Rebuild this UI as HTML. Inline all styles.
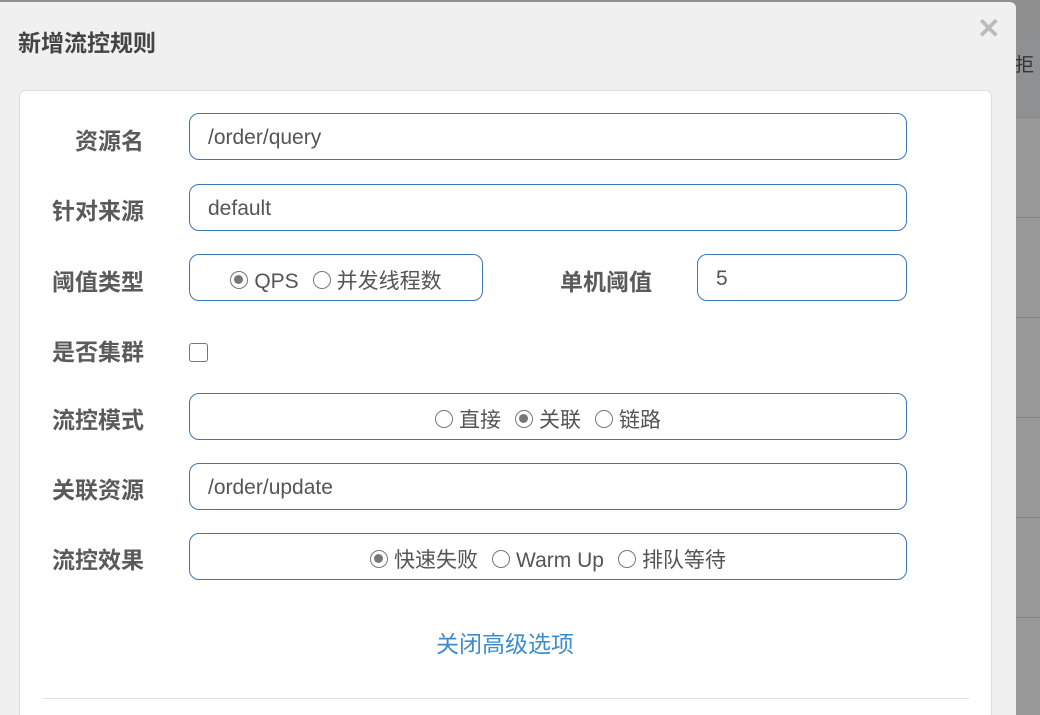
<!DOCTYPE html>
<html style="overflow:hidden;width:1040px;height:715px"><head><meta charset="utf-8"><style>
*{box-sizing:border-box;margin:0;padding:0}
body{width:1040px;height:715px;overflow:hidden;background:#999;font-family:"Liberation Sans","Noto Sans CJK SC",sans-serif;position:relative}
.bg1{position:absolute;left:0;top:0;width:1040px;height:37px;background:#8f8f8f}
.bg2{position:absolute;left:0;top:37px;width:1040px;height:80px;background:#8e9092}
.hl{position:absolute;left:0;width:1040px;height:1px;background:#858585}
.modal{position:absolute;left:0;top:2px;width:1016px;height:713px;background:#f0f0f0;border-radius:0 6px 0 0}
.title{position:absolute;left:18px;top:29px;font-size:23px;line-height:28px;font-weight:bold;color:#444}
.close{position:absolute;left:977px;top:12px;font-size:28px;color:#bbb;font-weight:bold}
.card{position:absolute;left:19px;top:90px;width:973px;height:625px;background:#fff;border:1px solid #ddd;border-bottom:none;border-radius:6px 6px 0 0}
.lbl{position:absolute;font-size:23px;line-height:26px;font-weight:bold;color:#5a5a5a;width:93px;text-align:right}
.box{position:absolute;border:1px solid #3a78b5;border-radius:10px;height:47px;font-size:21px;color:#555;line-height:47px;padding-left:18px}
.rg{padding-left:0;text-align:center;font-size:21px;line-height:53px}
.r{display:inline-block;width:18px;height:18px;border:1.5px solid #777;border-radius:50%;vertical-align:-1px;margin-right:6px;position:relative}
.r.c::after{content:"";position:absolute;left:3px;top:3px;width:9px;height:9px;border-radius:50%;background:#777}
.sp{margin-left:14px}
.cb{position:absolute;left:189px;top:343px;width:19px;height:19px;border:1.5px solid #777;border-radius:3px}
.link{position:absolute;left:0;width:1010px;text-align:center;top:625px;font-size:23px;color:#3c8dce}
.div{position:absolute;left:42px;top:698px;width:927px;height:1px;background:#e3e3e3}
</style></head><body>
<div class="bg1"></div><div class="bg2"></div>
<div class="hl" style="top:117px"></div><div class="hl" style="top:217px"></div><div class="hl" style="top:317px"></div><div class="hl" style="top:417px"></div><div class="hl" style="top:517px"></div><div class="hl" style="top:617px"></div>
<div style="position:absolute;left:1015px;top:50px;font-size:19px;color:#333">拒</div>
<div class="modal"></div>
<div class="title">新增流控规则</div>
<div class="close">✕</div>
<div class="card"></div>
<div class="lbl" style="left:51px;top:128px">资源名</div>
<div class="box" style="left:189px;top:113px;width:718px">/order/query</div>
<div class="lbl" style="left:51px;top:198px">针对来源</div>
<div class="box" style="left:189px;top:184px;width:718px">default</div>
<div class="lbl" style="left:51px;top:269px">阈值类型</div>
<div class="box rg" style="left:189px;top:254px;width:294px"><span class="r c"></span>QPS<span class="r sp"></span>并发线程数</div>
<div class="lbl" style="left:559px;top:269px">单机阈值</div>
<div class="box" style="left:697px;top:254px;width:210px">5</div>
<div class="lbl" style="left:51px;top:339px">是否集群</div>
<div class="cb"></div>
<div class="lbl" style="left:51px;top:407px">流控模式</div>
<div class="box rg" style="left:189px;top:393px;width:718px"><span class="r"></span>直接<span class="r c sp"></span>关联<span class="r sp"></span>链路</div>
<div class="lbl" style="left:51px;top:477px">关联资源</div>
<div class="box" style="left:189px;top:463px;width:718px">/order/update</div>
<div class="lbl" style="left:51px;top:547px">流控效果</div>
<div class="box rg" style="left:189px;top:533px;width:718px"><span class="r c"></span>快速失败<span class="r sp"></span>Warm Up<span class="r sp"></span>排队等待</div>
<div class="link">关闭高级选项</div>
<div class="div"></div>
</body></html>
